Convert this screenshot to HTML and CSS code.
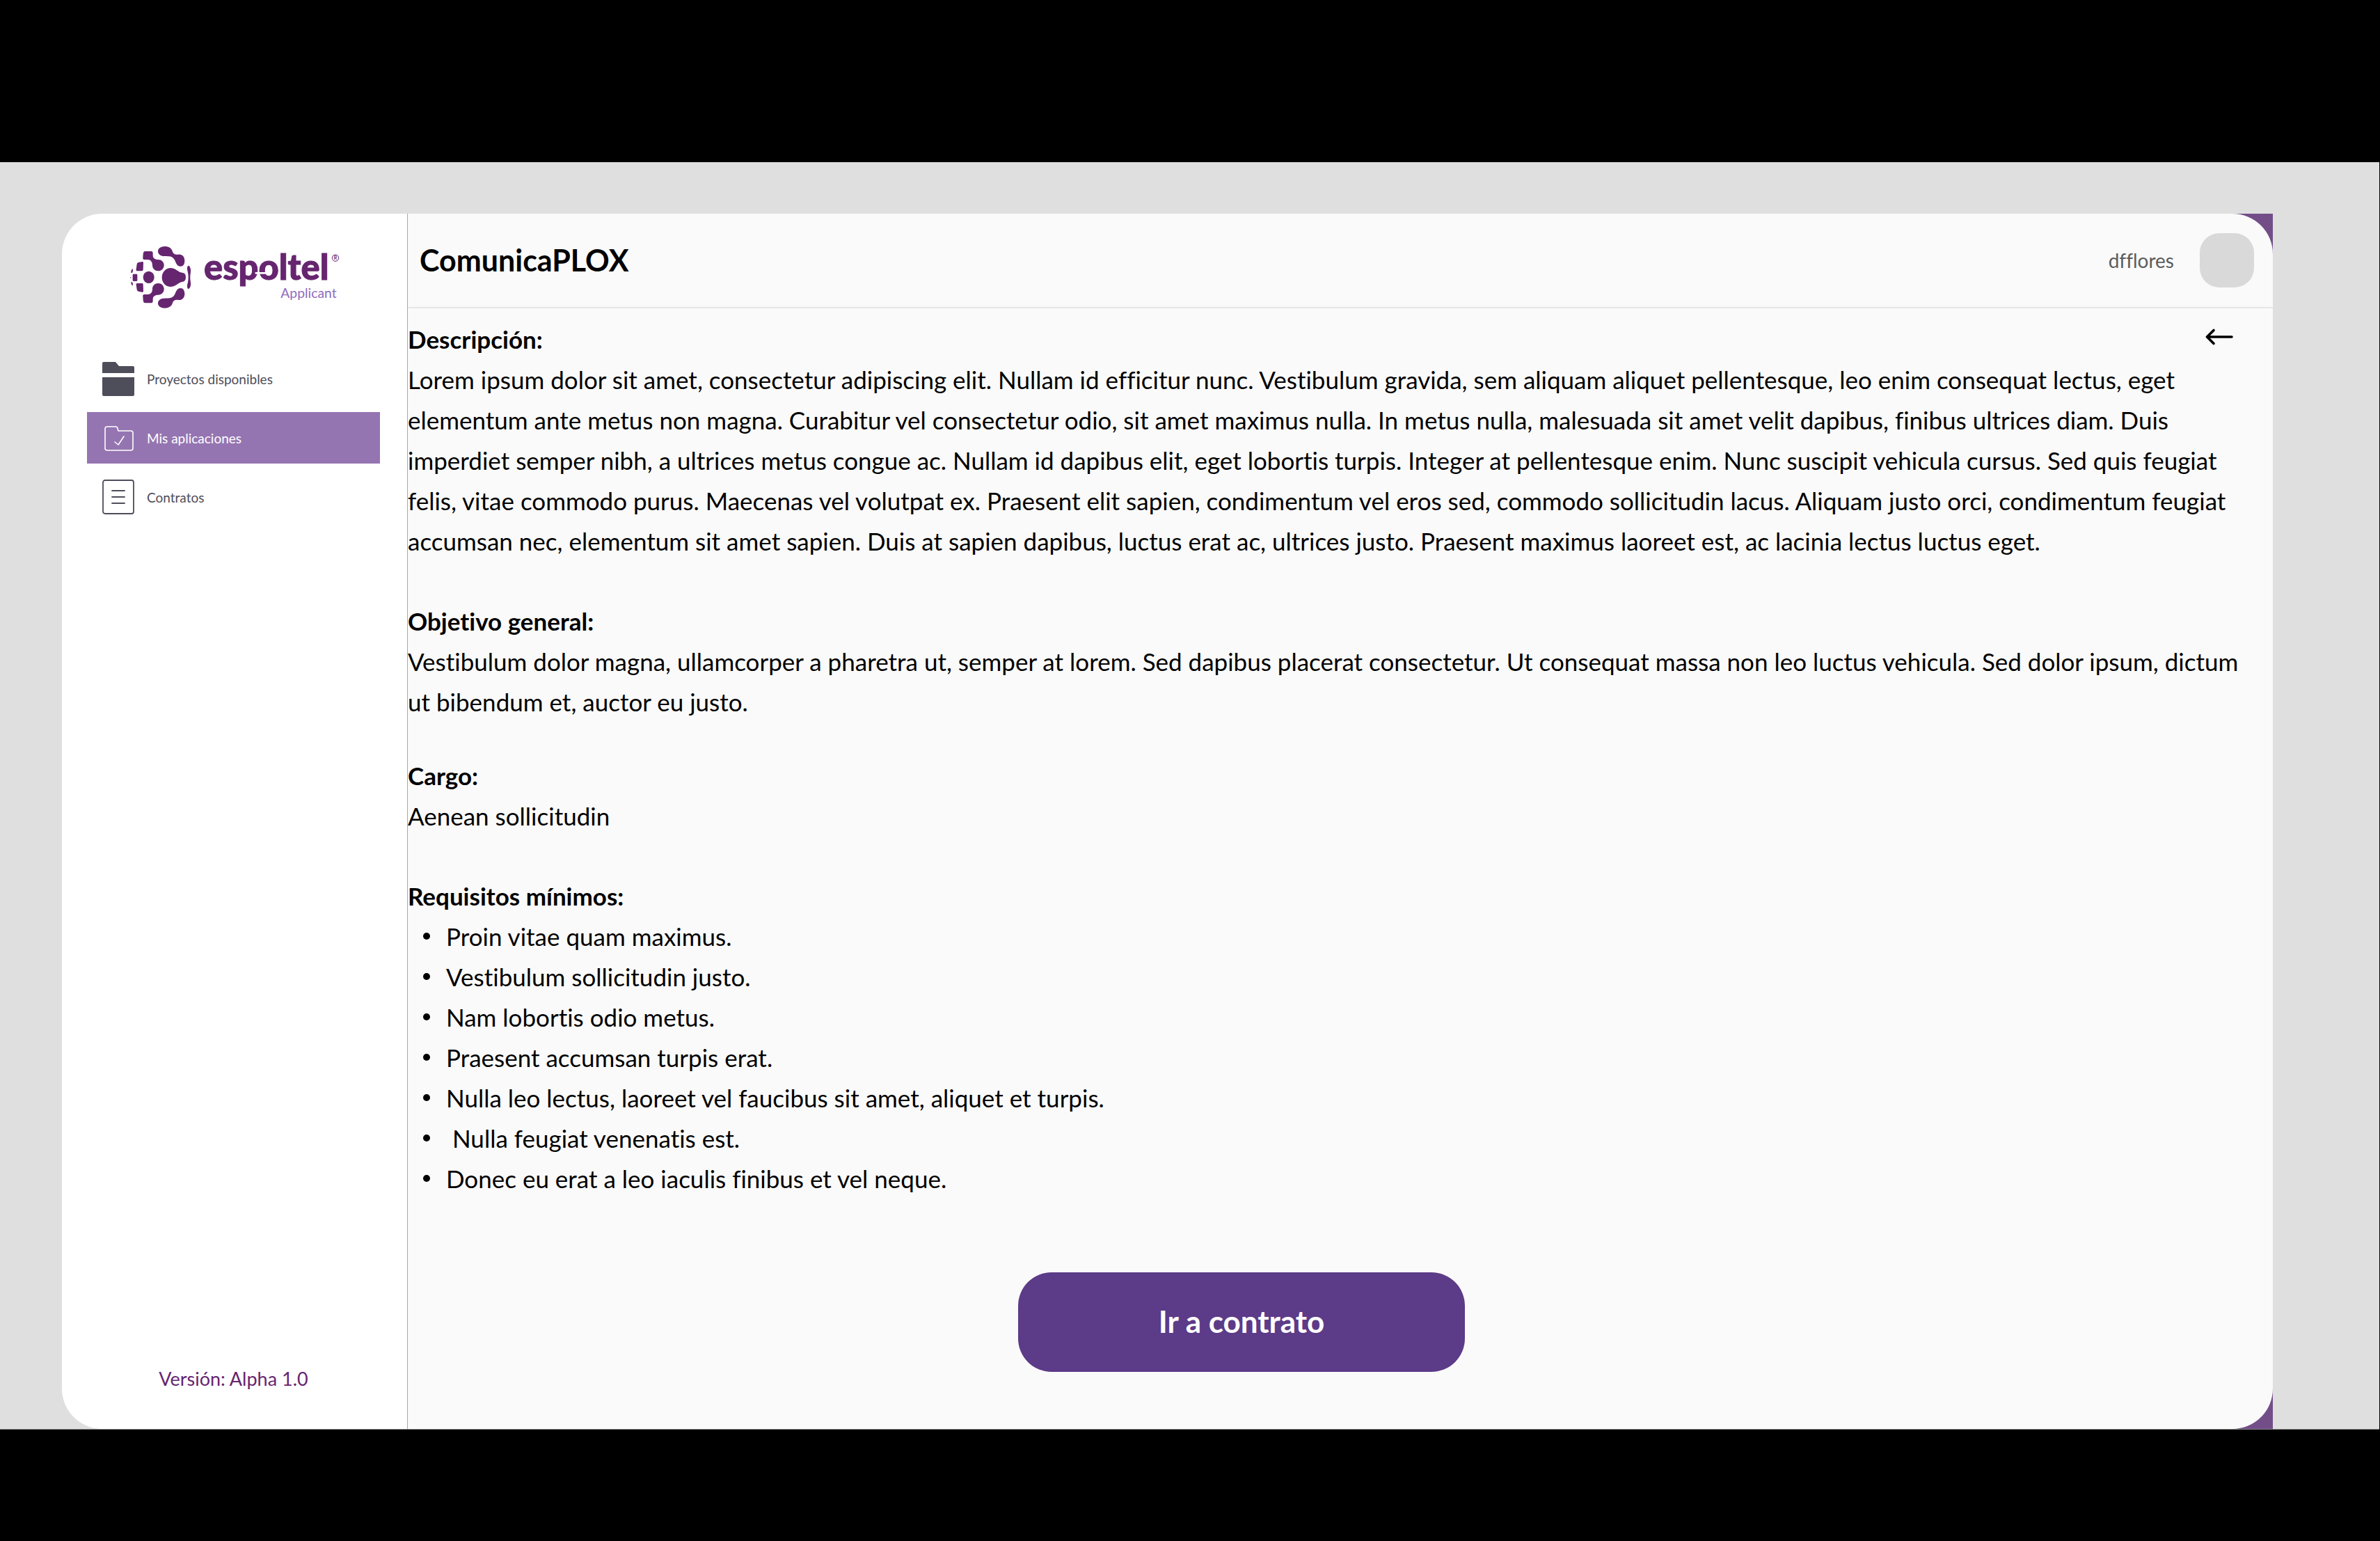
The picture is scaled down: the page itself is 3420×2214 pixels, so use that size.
FILE: index.html
```html
<!DOCTYPE html>
<html lang="es">
<head>
<meta charset="utf-8">
<meta name="viewport" content="width=device-width, initial-scale=1">
<title>ComunicaPLOX</title>
<link rel="stylesheet" href="styles.css">
</head>
<body>
<div class="stage">
  <div class="app">
    <aside class="sidebar">
      <svg class="logo" viewBox="0 0 1020 390" role="img" aria-label="espoltel Applicant">
        <g fill="#66256f">
          <path d="M200 72c18 0 29 8 33 20 3 12 12 17 25 15 18-2 28 10 28 27 0 15-7 24-17 24-14 0-19-11-23-21-5-13-14-21-26-22-8-1-14-1-22-1-16 0-27-8-27-21 0-12 12-21 29-21z"/>
          <path d="M200 338c18 0 29-8 33-20 3-12 12-17 25-15 18 2 28-10 28-27 0-15-7-24-17-24-14 0-19 11-23 21-5 13-14 21-26 22-8 1-14 1-22 1-16 0-27 8-27 21 0 12 12 21 29 21z"/>
          <path d="M116 93h26c5 0 7 3 7 9v9c0 11 8 18 23 18 14 0 25 10 25 24s-11 25-25 25-25-10-25-24c0-16-8-25-20-25h-15c-5 0-7-3-6-8l1-16c1-8 3-12 9-12z"/>
          <path d="M116 316h26c5 0 7-3 7-9v-8c0-11 8-18 23-18 14 0 25-10 25-25s-11-25-25-25-25 10-25 24c0 16-8 24-20 24h-15c-5 0-7 3-6 8l1 17c1 8 3 12 9 12z"/>
          <ellipse cx="131" cy="205" rx="24" ry="26"/>
          <path d="M226 165c19 0 31 15 42 19 8 3 23-1 23 21s-15 19-23 22c-11 4-23 19-42 19-21 0-38-17-38-40s17-41 38-41z"/>
          <path d="M87 141l16-3c4 0 5 2 5 6l-1 28c0 4-2 6-6 6H82c-4 0-6-3-5-8l3-21c1-4 3-7 7-8z"/>
          <path d="M87 266l16 3c4 0 5-2 5-6l-1-27c0-4-2-5-6-5H82c-4 0-6 2-5 7l3 20c1 4 3 7 7 8z"/>
          <rect x="62" y="191" width="20" height="31" rx="4"/>
          <path d="M57 172l6-3-1 15-8 3z"/>
          <path d="M57 238l6 3-1-13-8-3z"/>
          <circle cx="53" cy="206" r="2"/>
          <path d="M303 155c6 1 11 16 9 29-3 14-3 29 0 43 2 13-3 26-9 28-6 1-8-13-4-24 4-16 4-35 0-51-4-13-2-25 4-25z"/>
        </g>
        <text class="logo-word" x="369" y="217">espoltel</text>
        <path d="M590 187h68" stroke="#fff" stroke-width="8"/>
        <circle cx="936" cy="122" r="14" fill="none" stroke="#66256f" stroke-width="3"/>
        <text class="logo-mark" x="936" y="130">R</text>
        <text class="logo-sub" x="700" y="293">Applicant</text>
      </svg>
      <nav class="nav">
        <a class="nav-item" href="#">
          <svg class="nav-icon" viewBox="0 0 46 50" fill="#4e4d5a"><path d="M2 1h17l5 6h20q2 0 2 2v8H0V3q0-2 2-2zM0 23h46v25q0 2-2 2H2q-2 0-2-2z"/></svg>
          <span>Proyectos disponibles</span>
        </a>
        <a class="nav-item active" href="#" aria-current="page">
          <svg class="nav-icon" viewBox="0 0 46 50" fill="none" stroke="#fff" stroke-width="1.6" stroke-linecap="round" stroke-linejoin="round"><path d="M7 9h12q3 0 3 3l1 3h18q3 0 3 3v22q0 3-3 3H7q-3 0-3-3V12q0-3 3-3zM18 31l5 4 8-12"/></svg>
          <span>Mis aplicaciones</span>
        </a>
        <a class="nav-item" href="#">
          <svg class="nav-icon" viewBox="0 0 46 50" fill="none" stroke="#4e4d5a" stroke-width="1.8" stroke-linecap="round"><rect x="1" y="1" width="44" height="48" rx="3"/><path d="M14 16h18M14 25h18M14 34h18"/></svg>
          <span>Contratos</span>
        </a>
      </nav>
      <p class="version">Versión: Alpha 1.0</p>
    </aside>
    <div class="main-wrap">
      <div class="main">
        <header class="topbar">
          <h1>ComunicaPLOX</h1>
          <div class="user"><span>dfflores</span><button class="avatar" type="button" aria-label="Perfil"></button></div>
        </header>
        <main class="content">
          <a class="back" href="#" aria-label="Volver">
            <svg viewBox="0 0 40 24" fill="none" stroke="#000" stroke-width="3.6" stroke-linecap="round" stroke-linejoin="round"><path d="M38 12H3M12 2.500L2.500 12l9.500 9.500"/></svg>
          </a>
          <section>
            <h2>Descripción:</h2>
            <p>Lorem ipsum dolor sit amet, consectetur adipiscing elit. Nullam id efficitur nunc. Vestibulum gravida, sem aliquam aliquet pellentesque, leo enim consequat lectus, eget<br>
            elementum ante metus non magna. Curabitur vel consectetur odio, sit amet maximus nulla. In metus nulla, malesuada sit amet velit dapibus, finibus ultrices diam. Duis<br>
            imperdiet semper nibh, a ultrices metus congue ac. Nullam id dapibus elit, eget lobortis turpis. Integer at pellentesque enim. Nunc suscipit vehicula cursus. Sed quis feugiat<br>
            felis, vitae commodo purus. Maecenas vel volutpat ex. Praesent elit sapien, condimentum vel eros sed, commodo sollicitudin lacus. Aliquam justo orci, condimentum feugiat<br>
            accumsan nec, elementum sit amet sapien. Duis at sapien dapibus, luctus erat ac, ultrices justo. Praesent maximus laoreet est, ac lacinia lectus luctus eget.</p>
          </section>
          <section>
            <h2>Objetivo general:</h2>
            <p>Vestibulum dolor magna, ullamcorper a pharetra ut, semper at lorem. Sed dapibus placerat consectetur. Ut consequat massa non leo luctus vehicula. Sed dolor ipsum, dictum<br>
            ut bibendum et, auctor eu justo.</p>
          </section>
          <section class="role">
            <h2>Cargo:</h2>
            <p>Aenean sollicitudin</p>
          </section>
          <section>
            <h2>Requisitos mínimos:</h2>
            <ul>
              <li>Proin vitae quam maximus.</li>
              <li>Vestibulum sollicitudin justo.</li>
              <li>Nam lobortis odio metus.</li>
              <li>Praesent accumsan turpis erat.</li>
              <li>Nulla leo lectus, laoreet vel faucibus sit amet, aliquet et turpis.</li>
              <li>&nbsp;Nulla feugiat venenatis est.</li>
              <li>Donec eu erat a leo iaculis finibus et vel neque.</li>
            </ul>
          </section>
          <div class="actions"><button class="primary" type="button">Ir a contrato</button></div>
        </main>
      </div>
    </div>
  </div>
</div>
</body>
</html>
```
FILE: styles.css
```css
* { box-sizing: border-box; }

body {
  margin: 0;
  min-height: 100vh;
  padding: 233px 1px 160px 0;
  display: flex;
  flex-direction: column;
  background: #000;
  color: #000;
  font-family: Lato, "Noto Sans", sans-serif;
  font-variant-ligatures: none;
}

h1, h2, p, ul { margin: 0; }
a { color: inherit; text-decoration: none; }
button { border: 0; padding: 0; font: inherit; cursor: pointer; }

.stage {
  flex: 1;
  display: flex;
  padding: 74px 153px 0 89px;
  background: #dfdfdf;
  border-bottom: 1px solid #808080;
}

.app { flex: 1; display: flex; }

.sidebar {
  flex: 0 0 497px;
  display: flex;
  flex-direction: column;
  padding: 23px 39px 52px 36px;
  background: #fff;
  border-right: 1px solid #b0a0bc;
  border-radius: 58px 0 0 58px;
}

.logo { display: block; width: 340px; height: 130px; margin-left: 45px; }
.logo-word { font: 900 152px Lato, sans-serif; fill: #66256f; stroke: #66256f; stroke-width: 3px; }
.logo-mark { font: 700 21px Lato, sans-serif; fill: #66256f; text-anchor: middle; }
.logo-sub { font: 400 58px Lato, sans-serif; fill: #8f6cc0; }

.nav { display: flex; flex-direction: column; gap: 11px; margin-top: 47px; }
.nav-item {
  display: flex;
  align-items: center;
  gap: 18px;
  height: 74px;
  padding-left: 22px;
  font-size: 19px;
  color: #4e4d5a;
}
.nav-item.active { background: #9575b1; color: #fff; }
.nav-icon { width: 46px; height: 50px; }

.version {
  margin-top: auto;
  text-align: center;
  font-size: 27px;
  line-height: 40px;
  color: #66256f;
}

.main-wrap { flex: 1; min-width: 0; display: flex; background: #734d88; }
.main { flex: 1; min-width: 0; background: #fafafa; border-radius: 0 58px 58px 0; }

.topbar {
  display: flex;
  align-items: center;
  justify-content: space-between;
  height: 136px;
  padding: 0 27px 0 17px;
  border-bottom: 2px solid #e6e6e6;
}
.topbar h1 { font-size: 43px; line-height: 60px; }
.user { display: flex; align-items: center; gap: 37px; font-size: 28px; color: #5c5c5c; }
.avatar { width: 78px; height: 78px; border-radius: 28px; background: #d9d9d9; }

.content {
  position: relative;
  display: flex;
  flex-direction: column;
  gap: 57px;
  padding-top: 15px;
  font-size: 35px;
  line-height: 58px;
}
.content h2 { font-size: 35px; line-height: 58px; }
.content p { white-space: nowrap; }
.role { margin-top: -9px; }

.back { position: absolute; top: 29px; right: 57px; width: 40px; height: 24px; }
.back svg { display: block; width: 40px; height: 24px; }

.content ul { padding: 0; list-style: none; }
.content li { display: flex; align-items: center; gap: 23px; padding-left: 22px; }
.content li::before { content: ""; width: 10px; height: 10px; border-radius: 50%; background: #000; }

.actions { display: flex; justify-content: center; padding-right: 284px; margin-top: 49px; }
.primary {
  width: 642px;
  height: 143px;
  padding-bottom: 3px;
  border-radius: 48px;
  background: #5c3b88;
  color: #fff;
  font-size: 44px;
  font-weight: 700;
}
```
